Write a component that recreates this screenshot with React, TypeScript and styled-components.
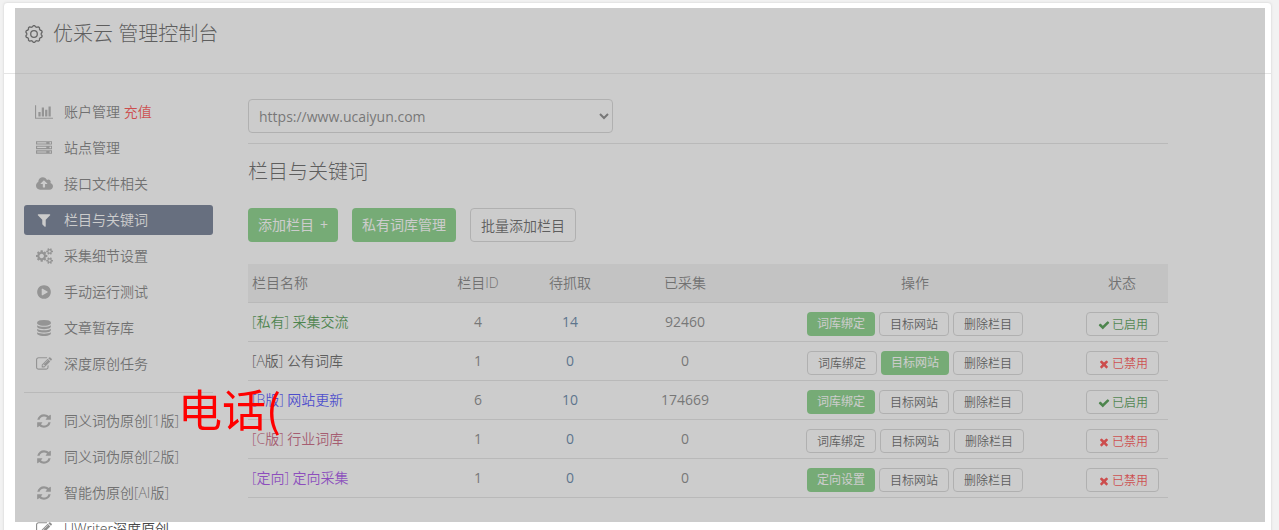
import React from "react";
import styled, { createGlobalStyle, css } from "styled-components";

const GlobalStyle = createGlobalStyle`
  * { box-sizing: border-box; }
  body {
    margin: 0;
    background: #f2f2f2;
    color: #484848;
    font: 350 14px/20px "Open Sans", "Noto Sans CJK SC", sans-serif;
    overflow: hidden;
  }
  button, select { font: inherit; color: inherit; }
  a { color: inherit; text-decoration: none; }
`;

const Page = styled.div`
  height: 100vh;
  padding: 2px 7px 0 3px;
  overflow: hidden;
`;

const Card = styled.div`
  min-height: 100%;
  background: #fff;
  border: 1px solid #e5e5e5;
  border-radius: 4px 4px 0 0;
  box-shadow: 0 0 2px #e5e5e5;
`;

const Header = styled.header`
  display: flex;
  align-items: center;
  gap: 9px;
  height: 71px;
  padding: 0 20px 8px;
  border-bottom: 1px solid #e5e5e5;
`;

const Title = styled.h1`
  margin: 0;
  font-size: 20px;
  line-height: 28px;
  font-weight: 300;
  color: #222;
`;

const Body = styled.div`
  display: flex;
  gap: 35px;
  padding: 23px 103px 0 20px;
`;

const Sidebar = styled.nav`
  flex: 0 0 189px;
`;

const Menu = styled.ul`
  display: flex;
  flex-direction: column;
  gap: 6px;
  margin: 0;
  padding: 0;
  list-style: none;
`;

const MenuLink = styled.a<{ $active?: boolean }>`
  display: flex;
  align-items: center;
  gap: 10px;
  height: 30px;
  padding: 0 10px;
  border-radius: 3px;
  white-space: nowrap;
  color: ${(p) => (p.$active ? "#fff" : "#484848")};
  background: ${(p) => (p.$active ? "#354565" : "transparent")};
`;

const IconSlot = styled.span<{ $active?: boolean }>`
  display: flex;
  justify-content: center;
  width: 20px;
  color: ${(p) => (p.$active ? "#fff" : "#8f8f8f")};
`;

const Recharge = styled.span`
  color: #f00;
`;

const Rule = styled.hr`
  height: 1px;
  margin: 13px 0;
  border: 0;
  background: #d9d9d9;
`;

const Main = styled.main`
  flex: 1;
  min-width: 0;
`;

const SiteSelectWrap = styled.div`
  display: flex;
  padding: 2px 0 10px;
  border-bottom: 1px solid #d9d9d9;
`;

const SiteSelect = styled.select`
  width: 365px;
  height: 34px;
  padding: 0 6px;
  border: 1px solid #c7c7c7;
  border-radius: 4px;
  background: #fff;
  color: #555;
  font-weight: 400;
`;

const Heading = styled.h2`
  margin: 14px 0 22px;
  font-size: 20px;
  line-height: 28px;
  font-weight: 300;
  color: #222;
`;

const Toolbar = styled.div`
  display: flex;
  gap: 14px;
  margin-bottom: 22px;
`;

const Button = styled.button<{ $green?: boolean; $small?: boolean }>`
  display: inline-flex;
  align-items: center;
  justify-content: center;
  gap: 6px;
  height: ${(p) => (p.$small ? 24 : 34)}px;
  padding: 2px 10px 0;
  border: 1px solid #c7c7c7;
  border-radius: 4px;
  background: #fff;
  color: #222;
  white-space: nowrap;
  font-size: ${(p) => (p.$small ? 12 : 14)}px;
  ${(p) =>
    p.$green &&
    css`
      padding: 0 10px;
      border: 0;
      background: #53bd53;
      color: #fff;
      font-weight: 400;
    `}
`;

const StatusButton = styled(Button)<{ $on: boolean }>`
  gap: 2px;
  width: 73px;
  padding: 2px 0 0 2px;
  color: ${(p) => (p.$on ? "#007000" : "#f00")};
`;

const Table = styled.table`
  width: 100%;
  table-layout: fixed;
  border-collapse: collapse;
`;

const Th = styled.th<{ $width: number; $left?: boolean }>`
  width: ${(p) => p.$width}%;
  height: 38px;
  padding: 0 4px;
  background: #ededed;
  border-bottom: 1px solid #d9d9d9;
  font-weight: 350;
  text-align: ${(p) => (p.$left ? "left" : "center")};
`;

const Td = styled.td<{ $color?: string; $left?: boolean }>`
  height: 39px;
  padding: 0 4px;
  border-bottom: 1px solid #d9d9d9;
  text-align: ${(p) => (p.$left ? "left" : "center")};
  color: ${(p) => p.$color ?? "#555"};
  font-weight: ${(p) => (p.$left ? 350 : 400)};
`;

const Actions = styled.div`
  display: flex;
  justify-content: center;
  gap: 4px;
  padding-top: 5px;
  font-weight: 350;
`;

const Mask = styled.div`
  position: fixed;
  inset: 8px 14px 8px 15px;
  background: rgba(153, 153, 153, 0.5);
  pointer-events: none;
`;

const PhoneNote = styled.div`
  position: fixed;
  left: 178px;
  top: 380px;
  color: #f00;
  font-family: "Noto Sans CJK SC", sans-serif;
  font-size: 44px;
  line-height: 56px;
  font-weight: 400;
  pointer-events: none;
`;

const icons = {
  chart: [2048, "M640 896v512h-256v-512h256zm384-512v1024h-256v-1024h256zm1024 1152v128h-2048v-1536h128v1408h1920zm-640-896v768h-256v-768h256zm384-384v1152h-256v-1152h256z"],
  server: [1792, "M128 1408h1024v-128h-1024v128zm0-512h1024v-128h-1024v128zm1568 448q0-40-28-68t-68-28-68 28-28 68 28 68 68 28 68-28 28-68zm-1568-960h1024v-128h-1024v128zm1568 448q0-40-28-68t-68-28-68 28-28 68 28 68 68 28 68-28 28-68zm0-512q0-40-28-68t-68-28-68 28-28 68 28 68 68 28 68-28 28-68zm96 832v384h-1792v-384h1792zm0-512v384h-1792v-384h1792zm0-512v384h-1792v-384h1792z"],
  cloud: [1920, "M1280 864q0-14-9-23l-352-352q-9-9-23-9t-23 9l-351 351q-10 12-10 24 0 14 9 23t23 9h224v352q0 13 9.5 22.5t22.5 9.5h192q13 0 22.5-9.5t9.5-22.5v-352h224q13 0 22.5-9.5t9.5-22.5zm640 288q0 159-112.5 271.5t-271.5 112.5h-1088q-185 0-316.5-131.5t-131.5-316.5q0-130 70-240t188-165q-2-30-2-43 0-212 150-362t362-150q156 0 285.5 87t188.5 231q71-62 166-62 106 0 181 75t75 181q0 76-41 138 130 31 213.5 135.5t83.5 238.5z"],
  filter: [1792, "M1595 295q17 41-14 70l-493 493v742q0 42-39 59-13 5-25 5-27 0-45-19l-256-256q-19-19-19-45v-486l-493-493q-31-29-14-70 17-39 59-39h1280q42 0 59 39z"],
  cogs: [1920, "M896 896q0-106-75-181t-181-75-181 75-75 181 75 181 181 75 181-75 75-181zm768 512q0-52-38-90t-90-38-90 38-38 90q0 53 37.500 90.500t90.500 37.500 90.500-37.500 37.500-90.500zm0-1024q0-52-38-90t-90-38-90 38-38 90q0 53 37.500 90.500t90.500 37.500 90.500-37.500 37.500-90.500zm-384 421v185q0 10-7 19.500t-16 10.500l-155 24q-11 35-32 76 34 48 90 115 7 11 7 20 0 12-7 19-23 30-82.500 89.500t-78.500 59.500q-11 0-21-7l-115-90q-37 19-77 31-11 108-23 155-7 24-30 24h-186q-11 0-20-7.500t-10-17.500l-23-153q-34-10-75-31l-118 89q-7 7-20 7-11 0-21-8-144-133-144-160 0-9 7-19 10-14 41-53t47-61q-23-44-35-82l-152-24q-10-1-17-9.500t-7-19.500v-185q0-10 7-19.500t16-10.500l155-24q11-35 32-76-34-48-90-115-7-11-7-20 0-12 7-20 22-30 82-89t79-59q11 0 21 7l115 90q34-18 77-32 11-108 23-154 7-24 30-24h186q11 0 20 7.500t10 17.500l23 153q34 10 75 31l118-89q8-7 20-7 11 0 21 8 144 133 144 160 0 8-7 19-12 16-42 54t-45 60q23 48 34 82l152 23q10 2 17 10.500t7 19.500zm640 533v140q0 16-149 31-12 27-30 52 51 113 51 138 0 4-4 7-122 71-124 71-8 0-46-47t-52-68q-20 2-30 2t-30-2q-14 21-52 68t-46 47q-2 0-124-71-4-3-4-7 0-25 51-138-18-25-30-52-149-15-149-31v-140q0-16 149-31 13-29 30-52-51-113-51-138 0-4 4-7 4-2 35-20t59-34 30-16q8 0 46 46.500t52 67.500q20-2 30-2t30 2q51-71 92-112l6-2q4 0 124 70 4 3 4 7 0 25-51 138 17 23 30 52 149 15 149 31zm0-1024v140q0 16-149 31-12 27-30 52 51 113 51 138 0 4-4 7-122 71-124 71-8 0-46-47t-52-68q-20 2-30 2t-30-2q-14 21-52 68t-46 47q-2 0-124-71-4-3-4-7 0-25 51-138-18-25-30-52-149-15-149-31v-140q0-16 149-31 13-29 30-52-51-113-51-138 0-4 4-7 4-2 35-20t59-34 30-16q8 0 46 46.500t52 67.500q20-2 30-2t30 2q51-71 92-112l6-2q4 0 124 70 4 3 4 7 0 25-51 138 17 23 30 52 149 15 149 31z"],
  play: [1792, "M896 128q209 0 385.5 103t279.5 279.5 103 385.5-103 385.5-279.5 279.5-385.5 103-385.5-103-279.5-279.5-103-385.5 103-385.5 279.5-279.5 385.5-103zm384 823q32-18 32-55t-32-55l-544-320q-31-19-64-1-32 19-32 56v640q0 37 32 56 16 8 32 8 17 0 32-9z"],
  database: [1792, "M896 768q237 0 443-43t325-127v170q0 69-103 128t-280 93.5-385 34.5-385-34.5-280-93.5-103-128v-170q119 84 325 127t443 43zm0 768q237 0 443-43t325-127v170q0 69-103 128t-280 93.5-385 34.5-385-34.5-280-93.5-103-128v-170q119 84 325 127t443 43zm0-384q237 0 443-43t325-127v170q0 69-103 128t-280 93.5-385 34.5-385-34.5-280-93.5-103-128v-170q119 84 325 127t443 43zm0-1152q208 0 385 34.5t280 93.5 103 128v128q0 69-103 128t-280 93.5-385 34.5-385-34.5-280-93.5-103-128v-128q0-69 103-128t280-93.5 385-34.5z"],
  edit: [1792, "M888 1184l116-116-152-152-116 116v56h96v96h56zm440-720q-16-16-33 1l-350 350q-17 17-1 33t33-1l350-350q17-17 1-33zm80 594v190q0 119-84.5 203.5t-203.5 84.5h-832q-119 0-203.5-84.5t-84.5-203.5v-832q0-119 84.5-203.5t203.5-84.5h832q63 0 117 25 15 7 18 23 3 17-9 29l-49 49q-14 14-32 8-23-6-45-6h-832q-66 0-113 47t-47 113v832q0 66 47 113t113 47h832q66 0 113-47t47-113v-126q0-13 9-22l64-64q15-15 35-7t20 29zm-96-738l288 288-672 672h-288v-288zm444 132l-92 92-288-288 92-92q28-28 68-28t68 28l152 152q28 28 28 68t-28 68z"],
  refresh: [1792, "M1639 1056q0 5-1 7-64 268-268 434.5t-478 166.5q-146 0-282.5-55t-243.5-157l-129 129q-19 19-45 19t-45-19-19-45v-448q0-26 19-45t45-19h448q26 0 45 19t19 45-19 45l-137 137q71 66 161 102t187 36q134 0 250-65t186-179q11-17 53-117 8-23 30-23h192q13 0 22.5 9.5t9.5 22.5zm25-800v448q0 26-19 45t-45 19h-448q-26 0-45-19t-19-45 19-45l138-138q-148-137-349-137-134 0-250 65t-186 179q-11 17-53 117-8 23-30 23h-199q-13 0-22.5-9.5t-9.5-22.5v-7q65-268 270-434.5t480-166.5q146 0 284 55.5t245 156.5l130-129q19-19 45-19t45 19 19 45z"],
  check: [1792, "M1671 566q0 40-28 68l-724 724-136 136q-28 28-68 28t-68-28l-136-136-362-362q-28-28-28-68t28-68l136-136q28-28 68-28t68 28l294 295 656-657q28-28 68-28t68 28l136 136q28 28 28 68z"],
  times: [1792, "M1490 1322q0 40-28 68l-136 136q-28 28-68 28t-68-28l-294-294-294 294q-28 28-68 28t-68-28l-136-136q-28-28-28-68t28-68l294-294-294-294q-28-28-28-68t28-68l136-136q28-28 68-28t68 28l294 294 294-294q28-28 68-28t68 28l136 136q28 28 28 68t-28 68l-294 294 294 294q28 28 28 68z"],
} as const;

type IconName = keyof typeof icons;

function Icon({ name, size = 16 }: { name: IconName; size?: number }) {
  const [width, path] = icons[name];
  return (
    <svg
      width={Math.round((width * size) / 1792)}
      height={size}
      viewBox={`0 0 ${width} 1792`}
      fill="currentColor"
      aria-hidden="true"
    >
      <path d={path} />
    </svg>
  );
}

// Outline of the header gear: ten rounded teeth around a ring.
const gearOutline =
  Array.from({ length: 120 }, (_, i) => {
    const angle = (i / 120) * Math.PI * 2;
    const wave = Math.cos(angle * 10);
    const radius = 7.8 + 0.6 * Math.sign(wave) * Math.sqrt(Math.abs(wave));
    const x = 10 + radius * Math.sin(angle);
    const y = 10 - radius * Math.cos(angle);
    return `${i ? "L" : "M"}${x.toFixed(2)} ${y.toFixed(2)}`;
  }).join("") + "Z";

function GearIcon() {
  return (
    <svg width="20" height="20" viewBox="0 0 20 20" fill="none" stroke="#333" strokeWidth="1.3" aria-hidden="true">
      <path d={gearOutline} strokeLinejoin="round" />
      <circle cx="10" cy="10" r="3.3" />
    </svg>
  );
}

type MenuEntry = { icon: IconName; label: string; extra?: string; active?: boolean };

const mainMenu: MenuEntry[] = [
  { icon: "chart", label: "账户管理", extra: "充值" },
  { icon: "server", label: "站点管理" },
  { icon: "cloud", label: "接口文件相关" },
  { icon: "filter", label: "栏目与关键词", active: true },
  { icon: "cogs", label: "采集细节设置" },
  { icon: "play", label: "手动运行测试" },
  { icon: "database", label: "文章暂存库" },
  { icon: "edit", label: "深度原创任务" },
];

const toolMenu: MenuEntry[] = [
  { icon: "refresh", label: "同义词伪原创[1版]" },
  { icon: "refresh", label: "同义词伪原创[2版]" },
  { icon: "refresh", label: "智能伪原创[AI版]" },
  { icon: "edit", label: "UWriter深度原创" },
];

function MenuList({ entries }: { entries: MenuEntry[] }) {
  return (
    <Menu>
      {entries.map((e) => (
        <li key={e.label}>
          <MenuLink href="#" $active={e.active}>
            <IconSlot $active={e.active}>
              <Icon name={e.icon} />
            </IconSlot>
            <span>
              {e.label}
              {e.extra && <Recharge> {e.extra}</Recharge>}
            </span>
          </MenuLink>
        </li>
      ))}
    </Menu>
  );
}

const rows = [
  { name: "[私有] 采集交流", color: "#007000", id: 4, pending: 14, done: 92460, bind: "词库绑定", green: 0, on: true },
  { name: "[A版] 公有词库", color: "#222", id: 1, pending: 0, done: 0, bind: "词库绑定", green: 1, on: false },
  { name: "[B版] 网站更新", color: "#0000ff", id: 6, pending: 10, done: 174669, bind: "词库绑定", green: 0, on: true },
  { name: "[C版] 行业词库", color: "#b02048", id: 1, pending: 0, done: 0, bind: "词库绑定", green: -1, on: false },
  { name: "[定向] 定向采集", color: "#8000e0", id: 1, pending: 0, done: 0, bind: "定向设置", green: 0, on: false },
];

export default function App() {
  return (
    <>
      <GlobalStyle />
      <Page>
        <Card>
          <Header>
            <GearIcon />
            <Title>优采云 管理控制台</Title>
          </Header>
          <Body>
            <Sidebar>
              <MenuList entries={mainMenu} />
              <Rule />
              <MenuList entries={toolMenu} />
            </Sidebar>
            <Main>
              <SiteSelectWrap>
                <SiteSelect aria-label="站点">
                  <option>https://www.ucaiyun.com</option>
                </SiteSelect>
              </SiteSelectWrap>
              <Heading>栏目与关键词</Heading>
              <Toolbar>
                <Button $green>
                  添加栏目 <span>+</span>
                </Button>
                <Button $green>私有词库管理</Button>
                <Button>批量添加栏目</Button>
              </Toolbar>
              <Table>
                <thead>
                  <tr>
                    <Th $width={20} $left>栏目名称</Th>
                    <Th $width={10}>栏目ID</Th>
                    <Th $width={10}>待抓取</Th>
                    <Th $width={15}>已采集</Th>
                    <Th $width={35}>操作</Th>
                    <Th $width={10}>状态</Th>
                  </tr>
                </thead>
                <tbody>
                  {rows.map((r) => (
                    <tr key={r.name}>
                      <Td $left $color={r.color}>{r.name}</Td>
                      <Td>{r.id}</Td>
                      <Td $color="#205081">{r.pending}</Td>
                      <Td>{r.done}</Td>
                      <Td>
                        <Actions>
                          {[r.bind, "目标网站", "删除栏目"].map((label, i) => (
                            <Button key={label} $small $green={r.green === i}>
                              {label}
                            </Button>
                          ))}
                        </Actions>
                      </Td>
                      <Td>
                        <Actions>
                          <StatusButton $small $on={r.on}>
                            <Icon name={r.on ? "check" : "times"} size={12} />
                            {r.on ? "已启用" : "已禁用"}
                          </StatusButton>
                        </Actions>
                      </Td>
                    </tr>
                  ))}
                </tbody>
              </Table>
            </Main>
          </Body>
        </Card>
      </Page>
      <Mask />
      <PhoneNote>电话(</PhoneNote>
    </>
  );
}
